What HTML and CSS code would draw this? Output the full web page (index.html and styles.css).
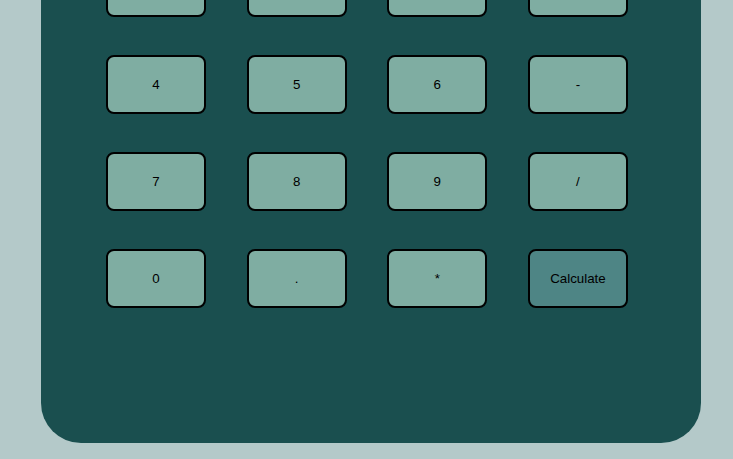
FILE: index.html
```html
<!DOCTYPE html>
<html>
<head>
<meta charset="utf-8">
<link rel="stylesheet" href="styles.css">
</head>
<body>
<div class="calc">
  <div class="keys">
    <button class="key">1</button>
    <button class="key">2</button>
    <button class="key">3</button>
    <button class="key">+</button>
    <button class="key">4</button>
    <button class="key">5</button>
    <button class="key">6</button>
    <button class="key">-</button>
    <button class="key">7</button>
    <button class="key">8</button>
    <button class="key">9</button>
    <button class="key">/</button>
    <button class="key">0</button>
    <button class="key">.</button>
    <button class="key">*</button>
    <button class="key calc-btn">Calculate</button>
  </div>
</div>
</body>
</html>
```
FILE: styles.css
```css
html, body {
  margin: 0;
  padding: 0;
  background: #b4c9c9;
  overflow: hidden;
}
body {
  height: 459px;
}
.calc {
  margin: -42px 0 0 41px;
  width: 660px;
  height: 485px;
  box-sizing: border-box;
  background: #1a4f4f;
  border-radius: 0 0 40px 40px;
  padding: 0 0 0 65px;
}
.keys {
  display: grid;
  grid-template-columns: repeat(4, 100px);
  grid-auto-rows: 59px;
  column-gap: 40.67px;
  row-gap: 38px;
}
.key {
  font-family: "Liberation Sans", Arial, sans-serif;
  font-size: 13.333px;
  color: #000;
  background: #7fada2;
  border: 2px solid #000;
  border-radius: 8px;
  padding: 0;
  margin: 0;
}
.calc-btn {
  background: #4e8585;
}
```
